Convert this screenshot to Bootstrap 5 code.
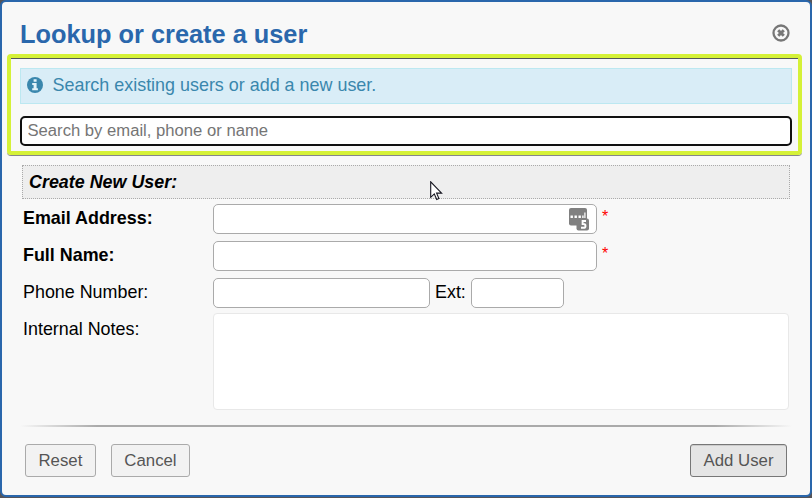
<!DOCTYPE html>
<html lang="en">
<head>
<meta charset="utf-8">
<title>Lookup or create a user</title>
<link href="https://cdn.jsdelivr.net/npm/bootstrap@5.3.0/dist/css/bootstrap.min.css" rel="stylesheet">
<style>
body{background:#555459;font-family:"Liberation Sans",Arial,sans-serif;font-size:17.9px;line-height:22px;color:#000;overflow:hidden}
.dialog{width:812px;height:497px;border:2px solid #2a67ac;border-radius:6px;background:#f8f8f8;padding:0 5px}
.dialog-head{height:52px;padding:15px 15px 0 13px}
.dialog-title{font-size:25.35px;line-height:34px;color:#2a67ac}
.close-btn{width:18px;height:18px;margin:7px 0 0}
.lookup{width:795px;height:101px;border:4px solid #d5f137;border-radius:4px;padding:9px 6px 0 9px;box-shadow:inset 0 1px #55585a,0 1px #85868b}
.notice{height:36px;padding:0 6px 2px;margin:1px 0 12px;border:1px solid #bce8f1;border-radius:0;background:#d9edf7;color:#3a87ad}
.notice-icon{margin-right:9.5px}
.notice-text{font-size:17.93px}
.fld{border:1px solid #aaa;border-radius:5px;background:#fff!important;height:30px;padding:0 6px;font-size:16.67px;line-height:20px;min-height:0;box-shadow:none!important}
.search{height:30px;border:2px solid #101010!important;padding:0 5px 0 5.5px;font-size:16.65px}
.fld::placeholder{color:#757575}
.section-title{height:34px;margin:10px 5px 5px 15px;padding:0 6px;width:768px;border:1px dotted #aaa;background:#eee}
.line{height:30px;margin:0 0 7px 16px}
.lbl{width:190px;flex:none;line-height:28px}
.req{color:red;font-size:16px;line-height:22px;margin-left:5px;margin-top:2px}
.wide{width:384px}.phone{width:217px}.ext{width:93px}
.ext-label{margin:0 5px;width:31px;flex:none;line-height:28px}
.manager{position:absolute;left:355px;top:3px}
.notes-line{height:97px;margin-top:-2px;margin-bottom:0}
.notes-line .lbl{line-height:32px}
.notes{width:576px;height:97px;border-color:#e8e8e8;resize:none;border-radius:4px}
.divider{height:2px;width:772px;margin:15px 0 17px 13px;background:linear-gradient(to right,transparent,#aaa 10%,#aaa 90%,transparent)}
.actions{margin:0 18px}
.act{height:33px;padding:0 12.5px;border:1px solid #aaa;border-radius:3px;background:#f2f2f2;color:#555;font-size:16.8px;line-height:30px}
.cancel{margin-left:15px}
.act-main{background:#e5e5e5;border-color:#777;box-shadow:inset 0 1px #ccc}
.pointer{position:absolute;left:430px;top:181px}
</style>
</head>
<body>
<main class="dialog">
  <header class="dialog-head d-flex justify-content-between">
    <h1 class="dialog-title fw-bold m-0">Lookup or create a user</h1>
    <button class="close-btn btn p-0 border-0 d-flex" aria-label="Close">
      <svg width="18" height="18" viewBox="0 0 18 18"><circle cx="9" cy="9" r="7.5" fill="none" stroke="#777" stroke-width="2.3"/><path d="M6.2 6.2l5.6 5.6m0-5.6l-5.6 5.6" stroke="#777" stroke-width="3"/></svg>
    </button>
  </header>
  <section class="lookup">
    <div class="notice alert d-flex align-items-center">
      <svg class="notice-icon" width="16" height="16" viewBox="0 0 16 16"><circle cx="8" cy="8" r="8" fill="#3a87ad"/><path d="M6.6 2.2h3v2.5h-3zM5.2 6h4.4v5.2h1.3v2H5.2v-2h1.4V8H5.2z" fill="#e4f4fa"/></svg>
      <span class="notice-text">Search existing users or add a new user.</span>
    </div>
    <input class="form-control fld search" placeholder="Search by email, phone or name" aria-label="Search">
  </section>
  <div class="section-title d-flex align-items-center fw-bold fst-italic">Create New User:</div>
  <div class="line d-flex"><label class="lbl fw-bold">Email Address:</label>
    <div class="position-relative"><input class="form-control fld wide" aria-label="Email Address">
      <svg class="manager" width="22" height="24" viewBox="0 0 22 24"><rect x="1" y="1" width="18" height="17.5" rx="2" fill="#808080"/><path d="M2.5 8.5h2.4v2.4H2.5zM6.5 8.5h2.4v2.4H6.5zM10.5 8.5h2.4v2.4h-2.4zM14.2 8.5h1.4v2.4h-1.4zM16.3 5.5h1.2v5.4h-1.2z" fill="#fff"/><rect x="8.5" y="11.5" width="12.5" height="12" rx="2" fill="#808080"/><path d="M18 14h-3.4v3h.9q2 0 2 1.9t-2 1.9H13" fill="none" stroke="#fff" stroke-width="1.9"/></svg>
    </div><span class="req">*</span></div>
  <div class="line d-flex"><label class="lbl fw-bold">Full Name:</label><input class="form-control fld wide" aria-label="Full Name"><span class="req">*</span></div>
  <div class="line d-flex"><label class="lbl">Phone Number:</label><input class="form-control fld phone" aria-label="Phone Number"><span class="ext-label">Ext:</span><input class="form-control fld ext" aria-label="Extension"></div>
  <div class="line notes-line d-flex"><label class="lbl">Internal Notes:</label><textarea class="form-control fld notes" aria-label="Internal Notes"></textarea></div>
  <div class="divider"></div>
  <footer class="actions d-flex">
    <button class="btn act">Reset</button><button class="btn act cancel">Cancel</button><button class="btn act act-main ms-auto">Add User</button>
  </footer>
</main>
<svg class="pointer" width="13" height="20" viewBox="0 0 13 20"><path d="M.7.8v15.5l3.6-3.4 2.4 5.6 2.2-1-2.3-5.4h5z" fill="#fff" stroke="#15151f" stroke-width="1.1"/></svg>
<script src="https://cdn.jsdelivr.net/npm/bootstrap@5.3.0/dist/js/bootstrap.bundle.min.js"></script>
</body>
</html>
